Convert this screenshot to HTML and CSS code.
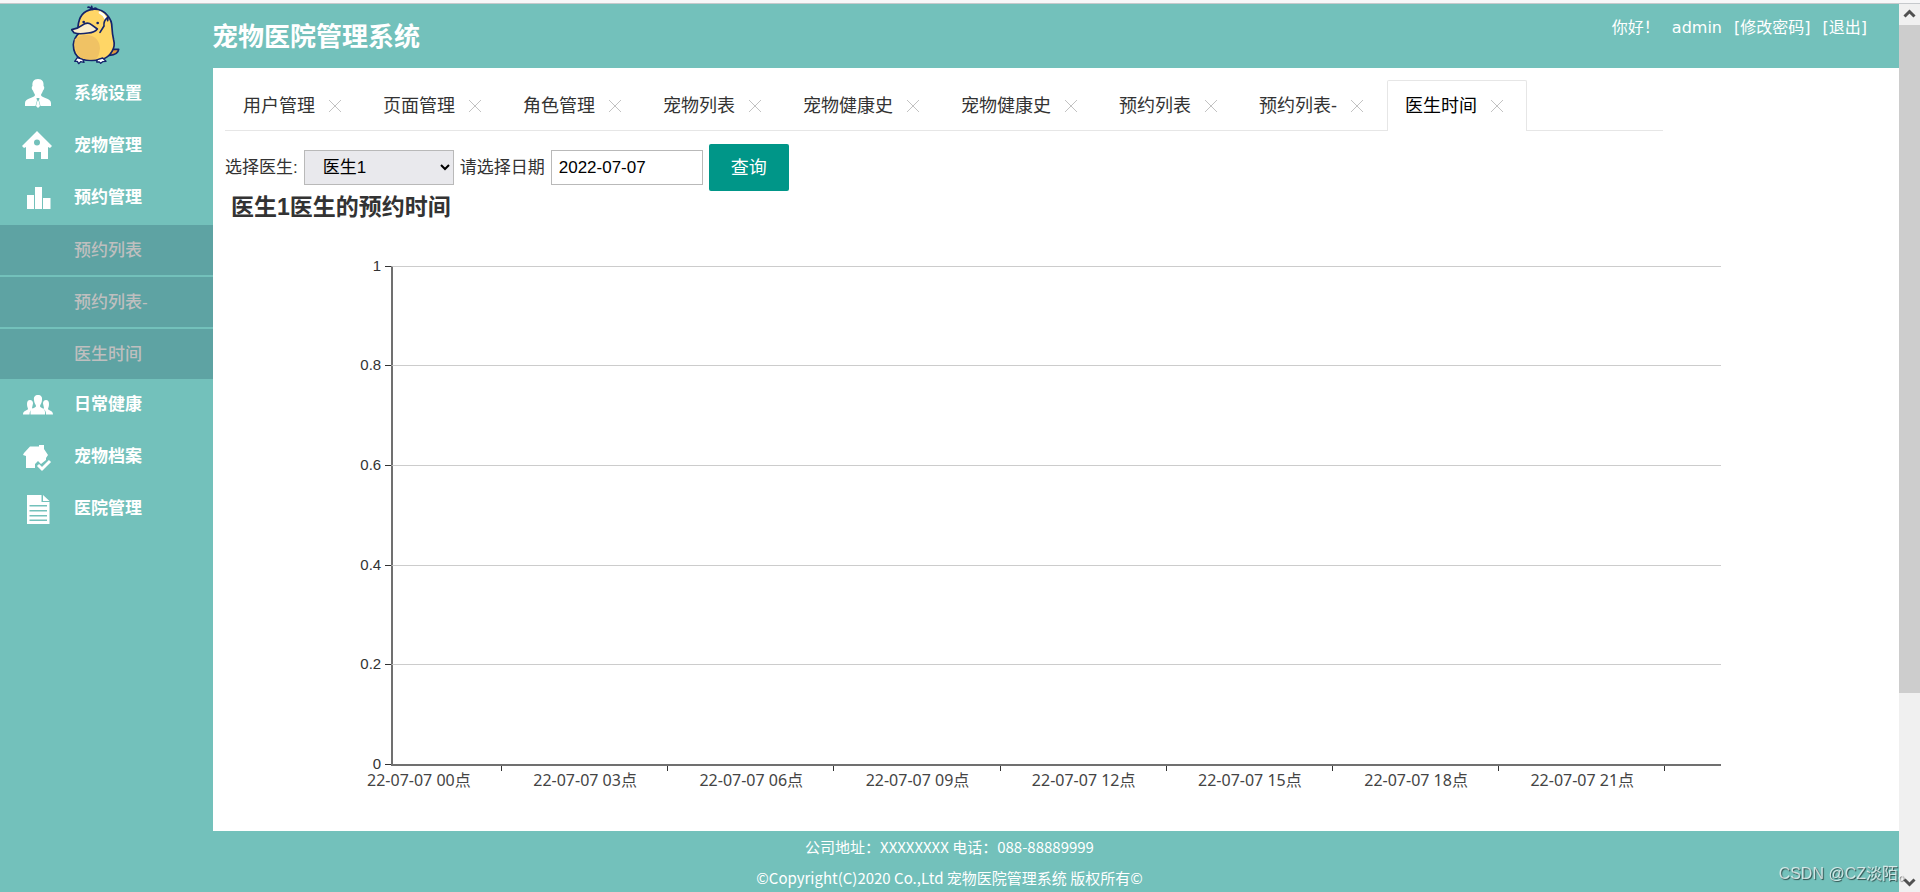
FILE: index.html
```html
<!DOCTYPE html>
<html lang="zh-CN">
<head>
<meta charset="utf-8">
<title>宠物医院管理系统</title>
<link rel="stylesheet" href="styles.css">
</head>
<body>
<div class="window">
  <div class="page">
    <header class="header">
      <div class="logo">
        <svg width="49" height="60" viewBox="213 15 147 180" fill="none" stroke="#14246b" stroke-width="5" stroke-linejoin="round" stroke-linecap="round" aria-label="logo">
          <path fill="#e0973c" d="M338 148L356 148Q354 164 328 166Z"/>
          <path fill="#ffd666" d="M234 80Q238 34 276 28Q304 24 322 46Q336 60 336 84Q337 104 341 120Q346 138 336 154Q326 172 306 178Q276 184 244 178Q220 166 220 134Q222 114 238 98Z"/>
          <path fill="#f0c264" stroke="none" d="M224 118Q240 104 262 104Q298 110 300 144Q298 168 288 178Q262 182 244 175Q222 162 224 118Z"/>
          <path d="M276 28Q268 20 264 22M277 28L275 19M279 28Q284 22 290 26"/>
          <path stroke="#fff" stroke-width="8" d="M300 38Q312 44 316 54"/>
          <path d="M323 52Q310 62 312 78M312 78L300 97M324 52L323 62"/>
          <path fill="#fbeecb" d="M215 89Q234 86 246 76Q262 64 274 74L292 87Q284 98 264 99Q236 104 222 98Z"/>
          <path fill="#fff" stroke-width="4" d="M232 173L224 184L232 184L236 191L242 185L252 187L248 178ZM292 179L290 186L298 186L302 190L308 185L318 184L308 174Z"/>
          <g fill="#14246b" stroke="none"><circle cx="251" cy="66" r="4"/><circle cx="293" cy="69" r="4"/></g>
        </svg>
      </div>
      <h1 class="title">宠物医院管理系统</h1>
      <nav class="user">
        <span>你好！</span><span class="name">admin</span><a href="#">[修改密码]</a><a href="#">[退出]</a>
      </nav>
    </header>
    <div class="body">
      <nav class="sidebar">
        <a class="item" href="#"><svg class="icon" viewBox="0 0 32 32"><path d="M17 1C21.500 1 23 4 22.500 8C24 9 23 12 22 12.500C21.500 15 20 16 20 17C20 20 30 20 30 25V28H19.500L18 22.500L18.500 20H15.500L16 22.500L14.500 28H4V25C4 20 14 20 14 17C14 16 12.500 15 12 12.500C11 12 10 9 11.500 8C11 4 12.500 1 17 1ZM16.500 22.500H17.500L19 28L17 30L15 28Z"/></svg>系统设置</a>
        <a class="item" href="#"><svg class="icon" viewBox="0 0 32 32"><path fill-rule="evenodd" d="M16 1L31 16L29 18L27 17V29H20V22H13V29H5V17L3 18L1 16ZM16 9.500A3 3 0 1 0 16 15.500A3 3 0 1 0 16 9.500Z"/></svg>宠物管理</a>
        <a class="item" href="#"><svg class="icon" viewBox="0 0 32 32"><path d="M6 13H13V27H6ZM14 5H21V27H14ZM22 16H29.500V27H22Z"/></svg>预约管理</a>
        <ul class="submenu">
          <li><a href="#">预约列表</a></li>
          <li><a href="#">预约列表-</a></li>
          <li><a href="#">医生时间</a></li>
        </ul>
        <a class="item" href="#"><svg class="icon" viewBox="0 0 32 32"><path d="M17 6C20 6 21.500 8 21 11C21 14 19 16 19 17C19 19 24 19 24 23V25.500H9.500V23C9.500 19 15 19 15 17C15 16 13 14 13 11C12.500 8 14 6 17 6ZM9 11C11 11 12 12.500 12 14.500L11 19L12 20C10 20.500 8.500 22 8.500 25.500H2C2 21 7 21.500 7 20C7 19 6 18 6 15C6 12.500 7 11 9 11ZM25 11C23 11 22 12.500 22 14.500L23 19L22 20C24 20.500 25 22 25 25.500H32C32 21 27 21.500 27 20C27 19 28 18 28 15C28 12.500 27 11 25 11Z"/></svg>日常健康</a>
        <a class="item" href="#"><svg class="icon" viewBox="0 0 32 32"><path d="M9 5.500H18V4H23V8L27 14L25 17V19L20 23L17 20L14 23V27H5V15L2 14L3 12Z"/><path d="M17 24L21 28L29 20" fill="none" stroke="currentColor" stroke-width="3"/></svg>宠物档案</a>
        <a class="item" href="#"><svg class="icon" viewBox="0 0 32 32"><path fill-rule="evenodd" d="M6 2H20.500V9H28.500V31H6ZM22 2L28.500 8H22ZM8.500 12V13.500H26V12ZM8.500 17V18.500H26V17ZM8.500 22V23.500H26V22ZM8.500 26.500V28H26V26.500Z"/></svg>医院管理</a>
      </nav>
      <main class="content">
        <div class="tabs">
          <a class="tab" href="#">用户管理<svg class="close" viewBox="0 0 12 12"><path d="M0 0L12 12M12 0L0 12"/></svg></a>
          <a class="tab" href="#">页面管理<svg class="close" viewBox="0 0 12 12"><path d="M0 0L12 12M12 0L0 12"/></svg></a>
          <a class="tab" href="#">角色管理<svg class="close" viewBox="0 0 12 12"><path d="M0 0L12 12M12 0L0 12"/></svg></a>
          <a class="tab" href="#">宠物列表<svg class="close" viewBox="0 0 12 12"><path d="M0 0L12 12M12 0L0 12"/></svg></a>
          <a class="tab" href="#">宠物健康史<svg class="close" viewBox="0 0 12 12"><path d="M0 0L12 12M12 0L0 12"/></svg></a>
          <a class="tab" href="#">宠物健康史<svg class="close" viewBox="0 0 12 12"><path d="M0 0L12 12M12 0L0 12"/></svg></a>
          <a class="tab" href="#">预约列表<svg class="close" viewBox="0 0 12 12"><path d="M0 0L12 12M12 0L0 12"/></svg></a>
          <a class="tab" href="#">预约列表-<svg class="close" viewBox="0 0 12 12"><path d="M0 0L12 12M12 0L0 12"/></svg></a>
          <a class="tab active" href="#">医生时间<svg class="close" viewBox="0 0 12 12"><path d="M0 0L12 12M12 0L0 12"/></svg></a>
        </div>
        <form class="filter">
          <label for="doctor">选择医生:</label>
          <select id="doctor"><option>医生1</option></select>
          <label for="date">请选择日期</label>
          <input id="date" type="text" value="2022-07-07">
          <button type="button">查询</button>
        </form>
        <section class="chart">
          <h2>医生1医生的预约时间</h2>
          <div class="plot">
            <div class="band"><span class="value">1</span><i class="line"></i></div>
            <div class="band"><span class="value">0.8</span><i class="line"></i></div>
            <div class="band"><span class="value">0.6</span><i class="line"></i></div>
            <div class="band"><span class="value">0.4</span><i class="line"></i></div>
            <div class="band"><span class="value">0.2</span><i class="line"></i></div>
          </div>
          <div class="axis">
            <span class="value">0</span>
            <div class="hours">
              <div class="hour"><span>22-07-07 00点</span></div>
              <div class="hour"><span>22-07-07 03点</span></div>
              <div class="hour"><span>22-07-07 06点</span></div>
              <div class="hour"><span>22-07-07 09点</span></div>
              <div class="hour"><span>22-07-07 12点</span></div>
              <div class="hour"><span>22-07-07 15点</span></div>
              <div class="hour"><span>22-07-07 18点</span></div>
              <div class="hour"><span>22-07-07 21点</span></div>
            </div>
          </div>
        </section>
      </main>
    </div>
    <footer class="footer">
      <p>公司地址：XXXXXXXX 电话：088-88889999</p>
      <p>©Copyright(C)2020 Co.,Ltd 宠物医院管理系统 版权所有©</p>
    </footer>
  </div>
  <div class="scrollbar">
    <svg class="arrow" viewBox="0 0 21 21"><path d="M5.500 12.500L10.500 7.500L15.500 12.500"/></svg>
    <div class="track"><div class="thumb"></div></div>
    <svg class="arrow" viewBox="0 0 21 21"><path d="M5.500 8.500L10.500 13.500L15.500 8.500"/></svg>
  </div>
</div>
<div class="watermark">CSDN @CZ淡陌。</div>
</body>
</html>
```
FILE: styles.css
```css
* { box-sizing: border-box; }
body {
  margin: 0;
  font-family: "Liberation Sans", "Noto Sans CJK SC", sans-serif;
  font-size: 17px;
  line-height: 24px;
  color: #333;
  background: #fff;
}
a { color: inherit; text-decoration: none; }
.window {
  display: flex;
  min-height: 100vh;
  border-top: 3px solid #f7f7f8;
}
.page {
  flex: 1;
  display: flex;
  flex-direction: column;
  background: #73c1bb;
  border-top: 1px solid #c6c9cc;
}
.header {
  display: flex;
  height: 64px;
  color: #fff;
}
.logo { width: 212px; padding: 1px 0 0 71px; }
.logo svg { display: block; }
.title { margin: 0; font-size: 26px; line-height: 66px; font-weight: 700; }
.user {
  display: flex;
  gap: 12px;
  margin-left: auto;
  padding-right: 32px;
  font-family: "DejaVu Sans", "Noto Sans CJK SC", sans-serif;
  font-size: 16px;
  line-height: 48px;
}
.body { flex: 1; display: flex; }
.sidebar { width: 213px; color: #fff; }
.item {
  display: flex;
  align-items: center;
  gap: 21px;
  height: 52px;
  padding-left: 21px;
  font-weight: 700;
}
.icon { width: 32px; height: 32px; fill: currentColor; }
.submenu {
  display: flex;
  flex-direction: column;
  gap: 2px;
  margin: 0;
  padding: 1px 0 0;
  list-style: none;
}
.submenu a {
  display: block;
  padding: 2px 0 0 74px;
  line-height: 48px;
  font-weight: 500;
  color: #bfbfbf;
  background: #5ea3a3;
}
.content { flex: 1; padding: 12px; background: #fff; }
.tabs {
  display: flex;
  width: 86.5%;
  height: 51px;
  border-bottom: 1px solid #e6e6e6;
  font-size: 18px;
}
.tab {
  display: flex;
  align-items: center;
  gap: 14px;
  height: 51px;
  padding: 0 23px 0 17px;
  border: 1px solid transparent;
  border-bottom: 0;
  white-space: nowrap;
}
.tab.active {
  color: #000;
  background: #fff;
  border-color: #e6e6e6;
  border-radius: 2px 2px 0 0;
}
.close { width: 12px; height: 12px; stroke: #c2c2c2; fill: none; }
.filter {
  display: flex;
  align-items: center;
  gap: 6px;
  padding-top: 13px;
}
.filter select, .filter input {
  height: 35px;
  border: 1px solid #b9b9b9;
  border-radius: 0;
  font: inherit;
  color: #000;
}
.filter select { width: 150px; padding: 0 4px 0 14px; background: #e9e9ed; }
.filter input { width: 152px; padding: 0 7px; background: #fff; }
.filter button {
  height: 47px;
  padding: 0 22px;
  border: 0;
  border-radius: 2px;
  font: inherit;
  font-size: 18px;
  color: #fff;
  background: #009688;
}
.chart h2 {
  margin: 4px 0 47px 6px;
  font-size: 23px;
  line-height: 24px;
  font-weight: 700;
}
.band, .axis { display: grid; grid-template-columns: 10% 80%; }
.band { height: 100px; }
.band:first-child, .band:nth-child(4) { height: 99px; }
.value {
  position: relative;
  height: 20px;
  margin-top: -10px;
  padding-right: 10px;
  font-size: 15px;
  line-height: 20px;
  text-align: right;
}
.value::after {
  content: "";
  position: absolute;
  right: 0;
  top: 10px;
  width: 6px;
  height: 1px;
  background: #333;
}
.line { border-top: 1px solid #ccc; border-left: 2px solid #707070; }
.hours {
  display: grid;
  grid-template-columns: repeat(8, minmax(0, 1fr));
  border-top: 2px solid #707070;
}
.hour { display: grid; grid-template-columns: repeat(3, minmax(0, 1fr)); }
.hour span {
  display: flex;
  justify-content: center;
  padding-top: 2px;
  font-family: "Noto Sans", "Noto Sans CJK SC", sans-serif;
  font-size: 16px;
  white-space: nowrap;
  color: #444;
}
.hour::after { content: ""; height: 5px; border-right: 1px solid #333; }
.footer {
  height: 61px;
  color: #fff;
  font-family: "Noto Sans CJK SC", sans-serif;
  font-size: 15px;
  line-height: 31px;
  text-align: center;
}
.footer p { margin: 0; }
.scrollbar {
  display: flex;
  flex-direction: column;
  width: 21px;
  background: #f0f0f0;
  border-top: 1px solid #c6c9cc;
}
.arrow { width: 21px; height: 21px; fill: none; stroke: #505050; stroke-width: 3; }
.track { flex: 1; }
.thumb { height: 79%; background: #cdcdcd; }
.watermark {
  position: fixed;
  right: 6px;
  bottom: 5px;
  font-size: 16px;
  line-height: 26px;
  color: rgba(255, 255, 255, 0.7);
  text-shadow: 1px 1px 1px rgba(0, 0, 0, 0.6);
}
```
